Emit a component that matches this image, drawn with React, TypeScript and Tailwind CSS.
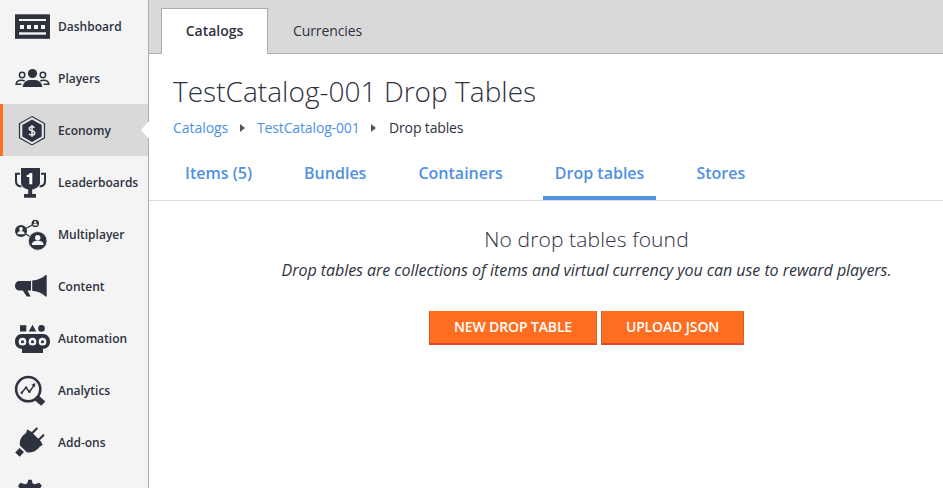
import type { ReactNode } from "react";

const INK = "#2d323e";

function Icon({ children }: { children: ReactNode }) {
  return (
    <svg className="block shrink-0" width="52" height="52" viewBox="0 0 52 52" fill={INK}>
      {children}
    </svg>
  );
}

const items: { label: string; active?: boolean; icon: ReactNode }[] = [
  {
    label: "Dashboard",
    icon: (
      <>
        <rect x="15" y="14.3" width="35" height="24.5" />
        <g fill="#f4f4f4">
          <rect x="19" y="19" width="27" height="2" />
          <rect x="20" y="25" width="4" height="4" />
          <rect x="27" y="25" width="4" height="4" />
          <rect x="34" y="25" width="4" height="4" />
          <rect x="41" y="25" width="4" height="4" />
          <rect x="19" y="32.3" width="27" height="2.4" />
        </g>
      </>
    ),
  },
  {
    label: "Players",
    icon: (
      <>
        <circle cx="32.5" cy="21.5" r="4.6" />
        <path d="M22.7 35c.4-4.300 3.300-6.800 7-7h5.600c3.700.2 6.600 2.700 7 7z" />
        <g fill="none" stroke={INK} strokeWidth="1.5">
          <circle cx="22.100" cy="23" r="2.700" />
          <circle cx="42.900" cy="23" r="2.700" />
          <path d="M21.500 32.300h-5.400c.3-2.600 2.300-4 5.100-4 1.500 0 2.500.2 3.500.7M43.500 32.300h5.400c-.3-2.600-2.300-4-5.100-4-1.500 0-2.500.2-3.500.7" />
        </g>
      </>
    ),
  },
  {
    label: "Economy",
    active: true,
    icon: (
      <>
        <path d="M32 12.600 44.500 19.600V33.800L32 40.900 19.500 33.800V19.600z" fill="#e5e5e5" stroke={INK} strokeWidth="1.200" />
        <path d="M32 15.500 41.700 21V32.500L32 38 22.300 32.500V21z" />
        <path d="M34.600 23.700c-.9-.7-1.600-.9-2.600-.9-1.700 0-2.700.8-2.700 2 0 2.800 5.400 1.200 5.400 4.100 0 1.300-1.100 2.100-2.800 2.100-1.100 0-2.100-.3-2.900-.9M32 20.900v11.800" fill="none" stroke="#e5e5e5" strokeWidth="1.600" />
      </>
    ),
  },
  {
    label: "Leaderboards",
    icon: (
      <>
        <path d="M21 12h19v14.500c0 3.800-3.300 6-7.800 6.900V38H36v3.800H24V38h4.200v-4.600c-4.300-.9-7.200-3.100-7.200-6.900z" />
        <path d="M20 17.800h-4v7.600c0 3 1.700 4.700 5.400 5M41 17.800h4v7.600c0 3-1.700 4.700-5.400 5" fill="none" stroke={INK} strokeWidth="2" />
        <path d="M26.700 19.200c1.700-.3 2.700-1 3.300-2.100h2.300V28.300H29.300v-7.400h-2.600z" fill="#fff" />
      </>
    ),
  },
  {
    label: "Multiplayer",
    icon: (
      <>
        <path d="M21 23 35 15.500M21 23l16 10" stroke={INK} strokeWidth="1.400" />
        <circle cx="35.300" cy="15.400" r="3.700" />
        <circle cx="21" cy="23" r="6" />
        <circle cx="37.700" cy="32.900" r="9.300" stroke="#f4f4f4" strokeWidth=".7" />
        <g fill="#f4f4f4">
          <circle cx="35.300" cy="14.200" r="1.100" />
          <path d="M33 17.500c.2-1.500 1-2.100 2.300-2.100s2.100.6 2.300 2.100z" />
          <circle cx="21" cy="21" r="1.900" />
          <path d="M17.300 26.300c.2-2.100 1.300-3.200 3.700-3.200s3.500 1.100 3.700 3.200z" />
          <circle cx="37.700" cy="29.800" r="2.700" />
          <path d="M31.800 37c.2-3.200 2.300-4.200 5.900-4.200s5.700 1 5.900 4.200z" />
        </g>
      </>
    ),
  },
  {
    label: "Content",
    icon: (
      <>
        <path d="M19.500 21H31v9.600h-3.500l3.200 6h-4l-3.900-6h-3.300c-2.700 0-4.500-2-4.500-4.700s1.800-4.900 4.500-4.900z" />
        <path d="M32.200 20.400c5.500-.3 10-2 13.300-5.400.7-.2 1.200 0 1.200.7v20.200c0 .7-.5.900-1.200.5-3.300-3.200-7.800-5.200-13.300-5.700z" />
      </>
    ),
  },
  {
    label: "Automation",
    icon: (
      <>
        <rect x="20" y="13.200" width="6.300" height="6.300" />
        <path d="M32.500 12.700 36.300 19.500h-7.600z" />
        <circle cx="41.500" cy="16.400" r="3.300" />
        <path d="M22 22h21c4.300 0 7 3.300 7 7.500s-2.700 7.300-7 7.300V41H22v-4.200c-4.300 0-7-3.100-7-7.300S17.700 22 22 22z" />
        <g fill={INK} stroke="#f4f4f4" strokeWidth="2.300">
          <circle cx="22.500" cy="29.700" r="2.700" />
          <circle cx="32.500" cy="29.700" r="2.700" />
          <circle cx="42.500" cy="29.700" r="2.700" />
        </g>
      </>
    ),
  },
  {
    label: "Analytics",
    icon: (
      <>
        <circle cx="28.200" cy="25.200" r="12.100" fill="none" stroke={INK} strokeWidth="2.500" />
        <path d="M39.200 32 45.300 37.400 41.200 41.800 34.900 36.400z" />
        <path d="m21.500 29 4.600-5.500 3.300 4.500 4.900-7.200" fill="none" stroke={INK} strokeWidth="1.500" />
        <path d="m31.500 20.700 3.700-1.700-.1 4.100z" />
        <circle cx="21.800" cy="28.700" r="1.200" />
        <circle cx="26" cy="23.800" r="1.200" />
        <circle cx="29.400" cy="27.800" r="1.200" />
      </>
    ),
  },
  {
    label: "Add-ons",
    icon: (
      <>
        <path d="M19.500 31.900 24 36 19.700 40.700 15.200 36.500z" />
        <path d="M27.300 13.600 31 15.600 40.800 25.200 42.700 29.100 39.900 30.600C37.400 34.400 32.200 37.400 26.900 36.300L20.100 29.700C18.900 24.400 21.500 20 25.900 17.300z" />
        <path d="m31.800 17.400 5-4.900M38.500 24.100l4.900-4.900" stroke={INK} strokeWidth="2.100" strokeLinecap="round" />
      </>
    ),
  },
  {
    label: "",
    icon: (
      <>
        <path d="M28.300 11.800h3.400l.8 3.500 2.300 1 4.500-1.600 2.500 3-2.100 3.200V40H20V20.900l-2-3.200 2.500-3 4.500 1.600 2.300-1z" />
      </>
    ),
  },
];

const tabs = ["Items (5)", "Bundles", "Containers", "Drop tables", "Stores"];

function Caret() {
  return (
    <svg width="5" height="8" viewBox="0 0 5 8" className="block">
      <path d="M0 0 5 4 0 8z" fill="#50545c" />
    </svg>
  );
}

const buttonClass =
  "h-[34px] border-x border-b-2 border-x-[#cf5f27] border-b-[#dd482d] bg-[#ff6e20] pb-0.5 tracking-[-0.13px]";

export default function App() {
  return (
    <div className="flex h-[488px] w-[943px] overflow-hidden bg-white font-['Open_Sans','Noto_Sans',sans-serif] text-[#2d323e]">
      <nav className="relative z-10 h-full w-[149px] shrink-0 border-r border-[#acacac] bg-[#f4f4f4]">
        {items.map((item, i) => (
          <a
            key={i}
            className={`relative flex h-[52px] items-center whitespace-nowrap text-[12px] font-semibold ${item.active ? "bg-[#d9d9d9]" : ""}`}
          >
            <Icon>{item.icon}</Icon>
            <span className="ml-1.5 pt-0.5">{item.label}</span>
            {item.active && (
              <>
                <span className="absolute top-0 left-0 h-full w-[3px] bg-[#ff6e20]" />
                <svg className="absolute top-[18px] -right-px" width="8" height="16" viewBox="0 0 8 16">
                  <path d="M8 0v16H7L0 8 7 0z" fill="#fff" />
                </svg>
              </>
            )}
          </a>
        ))}
      </nav>
      <main className="flex min-w-0 flex-1 flex-col">
        <div className="flex h-[54px] items-end bg-[#d9d9d9] text-[14px]">
          <div className="h-full w-3 border-b border-[#acacac]" />
          <div className="flex h-[46px] w-[107px] items-center justify-center border border-b-0 border-[#acacac] bg-white pb-0.5 font-semibold">
            Catalogs
          </div>
          <div className="flex h-[46px] flex-1 items-center border-b border-[#acacac] pl-[25px] tracking-[-0.1px]">Currencies</div>
        </div>
        <header className="pl-6">
          <h1 className="mt-[19px] h-9 text-[28px] leading-9 font-light tracking-[0.03px]">TestCatalog-001 Drop Tables</h1>
          <div className="mt-[9px] flex h-5 items-center text-[14px] leading-5 tracking-[-0.14px] text-[#5091e1]">
            <span className="w-[55px] tracking-[-0.05px]">Catalogs</span>
            <span className="mr-3 ml-3"><Caret /></span>
            <span className="w-[102px] whitespace-nowrap">TestCatalog-001</span>
            <span className="mr-[13px] ml-3"><Caret /></span>
            <span className="text-[#2d323e]">Drop tables</span>
          </div>
        </header>
        <div className="mt-2 flex h-[55px] gap-7 border-b border-[#d9d9d9] pl-6 text-[16px] font-semibold text-[#5091e1]">
          {tabs.map((t) => (
            <div key={t} className={`h-[54px] px-3 pt-[15px] leading-6 tracking-[0.01px] ${t === "Drop tables" ? "border-b-4 border-[#5091e1]" : ""}`}>
              {t}
            </div>
          ))}
        </div>
        <section className="ml-6 flex w-[827px] shrink-0 flex-col items-center pt-6">
          <h2 className="h-7 text-[21px] leading-7 font-light tracking-[0.13px]">No drop tables found</h2>
          <p className="mt-[5px] h-6 text-[16px] leading-6 tracking-[-0.045px] whitespace-nowrap italic">
            Drop tables are collections of items and virtual currency you can use to reward players.
          </p>
          <div className="mt-[29px] flex gap-1 text-[14px] font-semibold text-white">
            <button className={`w-[168px] ${buttonClass}`}>NEW DROP TABLE</button>
            <button className={`w-[143px] ${buttonClass}`}>UPLOAD JSON</button>
          </div>
        </section>
      </main>
    </div>
  );
}
